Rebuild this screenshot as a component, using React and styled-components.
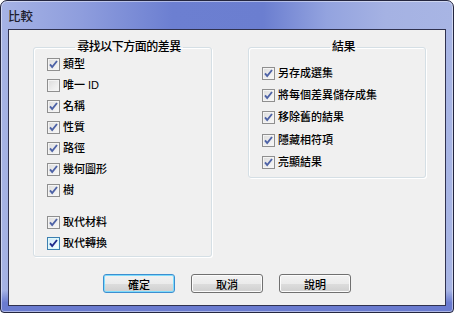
import styled, { createGlobalStyle } from 'styled-components';

const GlobalStyle = createGlobalStyle`
  html, body {
    margin: 0;
    padding: 0;
    background: #ffffff;
  }
  body {
    font-family: "Liberation Sans", "Noto Sans CJK TC", sans-serif;
  }
`;

const FONT = `"Liberation Sans", "Noto Sans CJK TC", sans-serif`;

const Window = styled.div`
  width: 454px;
  height: 313px;
  box-sizing: border-box;
  border: 1px solid #24263f;
  border-radius: 7px 7px 4px 4px;
  box-shadow: inset 0 0 0 1px rgba(255, 255, 255, 0.45);
  background:
    linear-gradient(to bottom, rgba(106, 124, 207, 0) 0%, rgba(106, 124, 207, 0) 93%, #6a7bcf 97%),
    linear-gradient(to right, #a6b3e5 0%, #8e9ddd 18%, #6c7fd1 38%, #6b7ed0 58%, #93a3df 72%, #a5b2e3 85%, #a8b5e4 100%);
  display: flex;
  flex-direction: column;
  padding: 0 7px 6px 7px;
  font-family: ${FONT};
`;

const TitleBar = styled.div`
  height: 28px;
  display: flex;
  align-items: center;
  font-size: 12.5px;
  font-weight: 500;
  color: #1d1d2e;
`;

const Client = styled.div`
  flex: 1;
  background: #f0f0f0;
  border: 1px solid #30324f;
  display: flex;
  flex-direction: column;
  padding: 10px 0 0 0;
`;

const Groups = styled.div`
  display: flex;
  align-items: flex-start;
  padding-left: 24px;
  gap: 36px;
`;

const Group = styled.fieldset`
  margin: 0;
  width: ${p => p.$w}px;
  height: ${p => p.$h}px;
  box-sizing: border-box;
  border: 1px solid #d5dfe5;
  border-radius: 3px;
  box-shadow: inset 1px 1px 0 #ffffff, 1px 1px 0 #ffffff;
  padding: ${p => p.$pt}px 0 0 13px;
  min-width: 0;
`;

const Legend = styled.legend`
  margin: 0 auto;
  padding: 0 2px;
  font-size: 12px;
  font-weight: 500;
  line-height: 14px;
  letter-spacing: -0.5px;
  color: #000;
`;

const Row = styled.div`
  display: flex;
  align-items: center;
  height: ${p => p.$h}px;
  gap: 3px;
  font-size: 11px;
  font-weight: 500;
  color: #000;
  margin-top: ${p => p.$gap || 0}px;
`;

const Box = styled.span`
  width: 13px;
  height: 13px;
  box-sizing: border-box;
  border: 1px solid ${p => (p.$hot ? '#3c7fb1' : '#8f8f8f')};
  background: ${p => (p.$hot
    ? 'linear-gradient(135deg, #cbe9fa 0%, #e9f6fd 60%, #ffffff 100%)'
    : 'linear-gradient(135deg, #dcdcdc 0%, #eeeeee 60%, #f8f8f8 100%)')};
  box-shadow: inset 0 0 0 1px ${p => (p.$hot ? '#def9fa' : '#f4f4f4')};
  display: flex;
  align-items: center;
  justify-content: center;
  flex-shrink: 0;
`;

const Label = styled.span`
  line-height: 13px;
  white-space: nowrap;
`;

const Check = ({ hot }) => (
  <svg width="11" height="11" viewBox="0 0 11 11">
    <path
      d="M2 5.3 L4.2 8 L9 2"
      fill="none"
      stroke={hot ? '#1f2a8c' : '#4d62a6'}
      strokeWidth="1.9"
    />
  </svg>
);

const Checkbox = ({ checked = true, hot, label, h, gap }) => (
  <Row $h={h} $gap={gap}>
    <Box $hot={hot}>{checked && <Check hot={hot} />}</Box>
    <Label>{label}</Label>
  </Row>
);

const Buttons = styled.div`
  display: flex;
  justify-content: center;
  gap: 16px;
  margin-top: 17px;
`;

const Button = styled.button`
  width: 72px;
  height: 19px;
  box-sizing: border-box;
  padding: 0;
  font-family: ${FONT};
  font-size: 11px;
  font-weight: 500;
  color: #000;
  border: 1px solid ${p => (p.$default ? '#3c8ed0' : '#707070')};
  border-radius: 3px;
  background: linear-gradient(to bottom, #f2f2f2 0%, #ebebeb 50%, #dddddd 51%, #cfcfcf 100%);
  box-shadow: inset 0 0 0 1px ${p => (p.$default ? '#7fdcfc' : '#fcfcfc')};
`;

const findItems = [
  { label: '類型' },
  { label: '唯一 ID', checked: false },
  { label: '名稱' },
  { label: '性質' },
  { label: '路徑' },
  { label: '幾何圖形' },
  { label: '樹' },
];

const resultItems = ['另存成選集', '將每個差異儲存成集', '移除舊的結果', '隱藏相符項', '亮顯結果'];

export default function App() {
  return (
    <>
      <GlobalStyle />
      <Window>
        <TitleBar>比較</TitleBar>
        <Client>
          <Groups>
            <Group $w={179} $h={217} $pt={0}>
              <Legend>尋找以下方面的差異</Legend>
              {findItems.map(it => (
                <Checkbox key={it.label} label={it.label} checked={it.checked !== false} h={21} />
              ))}
              <Checkbox label="取代材料" h={21} gap={11} />
              <Checkbox label="取代轉換" h={21} hot />
            </Group>
            <Group $w={178} $h={138} $pt={8}>
              <Legend>結果</Legend>
              {resultItems.map(l => (
                <Checkbox key={l} label={l} h={22.3} />
              ))}
            </Group>
          </Groups>
          <Buttons>
            <Button $default>確定</Button>
            <Button>取消</Button>
            <Button>說明</Button>
          </Buttons>
        </Client>
      </Window>
    </>
  );
}
